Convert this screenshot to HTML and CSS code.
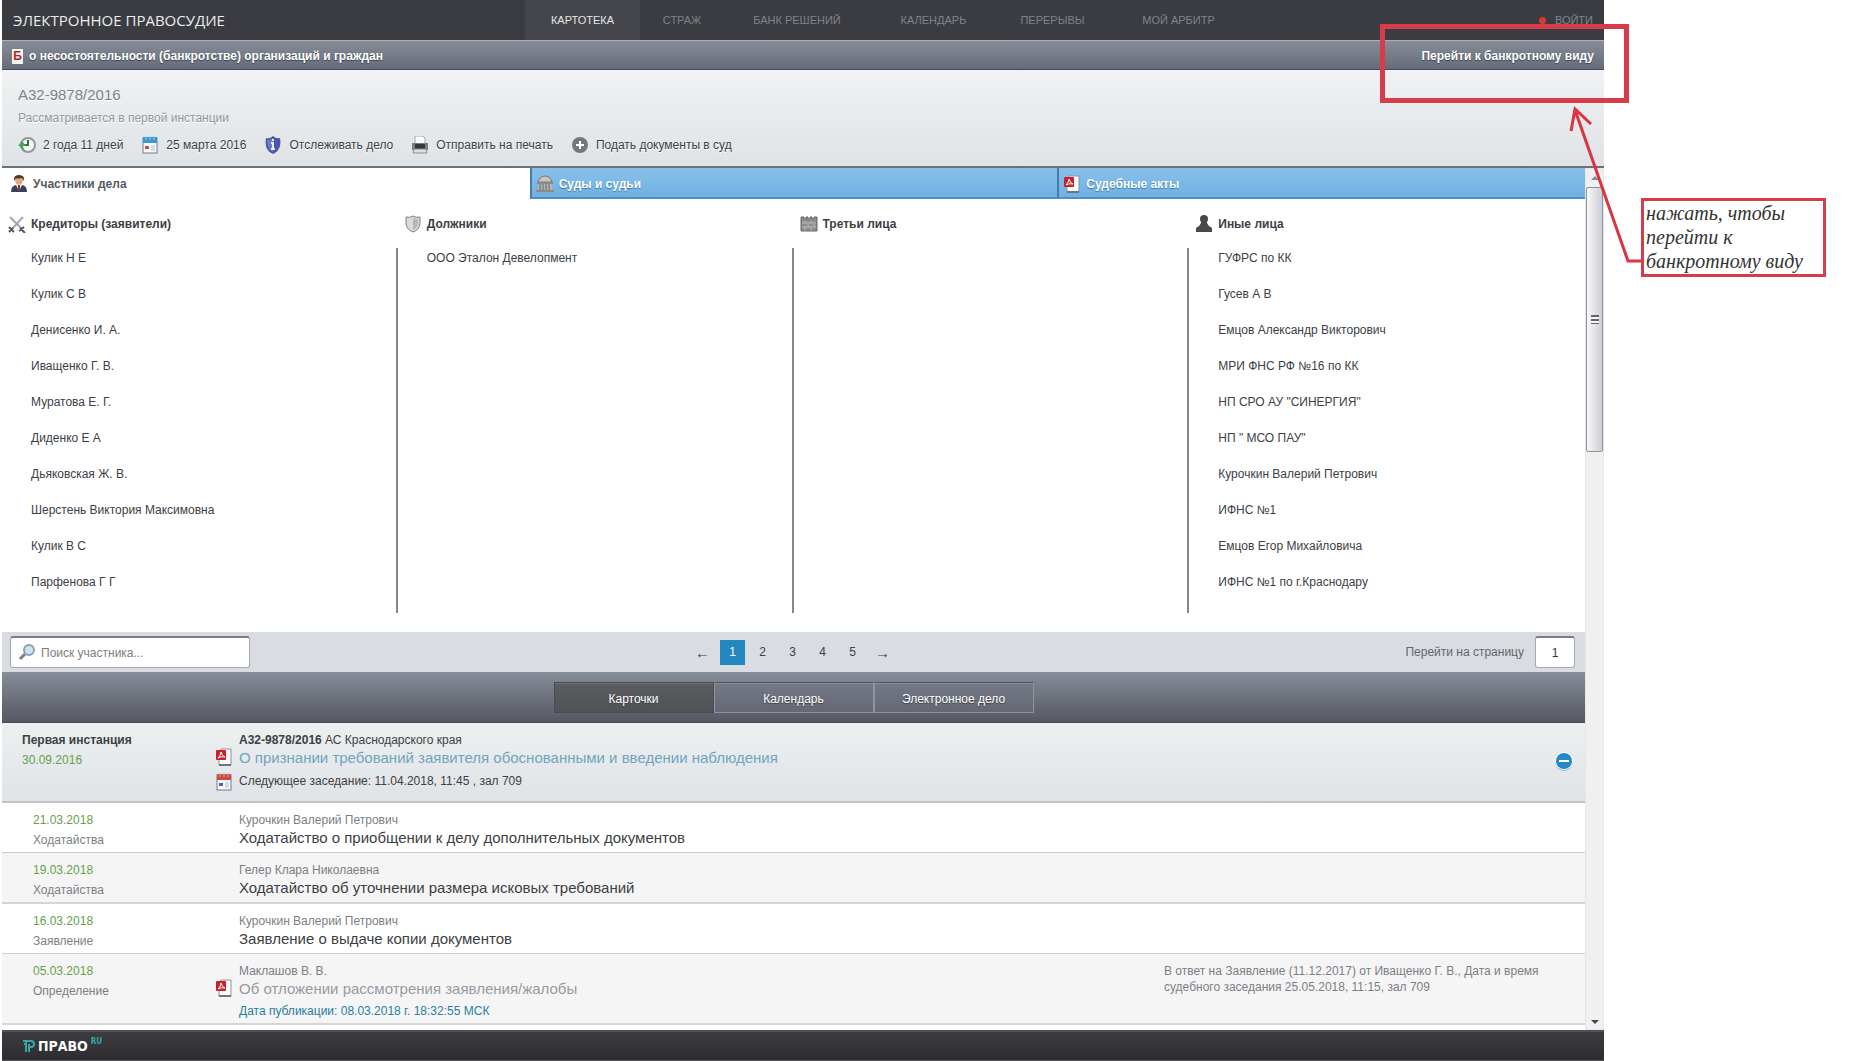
FILE: index.html
```html
<!DOCTYPE html>
<html lang="ru">
<head>
<meta charset="utf-8">
<title>Электронное правосудие</title>
<link rel="stylesheet" href="styles.css">
</head>
<body>
<svg class="sprite" aria-hidden="true">
  <symbol id="pdf" viewBox="0 0 16 18">
    <path d="M5 1h10v16H3V6z" fill="#fcfcfc" stroke="#8d9298"/>
    <path d="M3 17h12" stroke="#6f747a" stroke-width="2"/>
    <rect x="0" y="2" width="10" height="10" rx="1" fill="#c9202c"/>
    <path d="M2 10q3-3 3-6 1 4 4 5-4-1-7 1" fill="none" stroke="#fff"/>
  </symbol>
  <symbol id="calendar" viewBox="0 0 16 18">
    <rect x="1" y="2" width="14" height="15" fill="#f8fafb" stroke="#6d7d8d"/>
    <rect x="1" y="1" width="14" height="6" class="calendar-top"/>
    <path d="M4 0v4M8 0v4M12 0v4" stroke="#a8c4d6"/>
    <path d="M3 10h4v3H3z" class="calendar-day"/>
    <path d="M9 10h4M9 12h4M9 14h4" stroke="#b8bfc7"/>
  </symbol>
</svg>

<div class="page">
  <div class="app">
    <header class="topbar">
      <a class="brand" href="#">ЭЛЕКТРОННОЕ ПРАВОСУДИЕ</a>
      <nav class="menu">
        <a class="current" href="#">КАРТОТЕКА</a>
        <a href="#">СТРАЖ</a>
        <a href="#">БАНК РЕШЕНИЙ</a>
        <a href="#">КАЛЕНДАРЬ</a>
        <a href="#">ПЕРЕРЫВЫ</a>
        <a href="#">МОЙ АРБИТР</a>
      </nav>
      <a class="login" href="#"><span class="dot"></span>ВОЙТИ</a>
    </header>

    <div class="category">
      <span class="badge">Б</span>
      <span>о несостоятельности (банкротстве) организаций и граждан</span>
      <a class="switch" href="#">Перейти к банкротному виду</a>
    </div>

    <section class="case">
      <h1>А32-9878/2016</h1>
      <p class="status">Рассматривается в первой инстанции</p>
      <ul class="actions">
        <li>
          <svg class="icon" viewBox="0 0 18 18"><circle cx="10" cy="9" r="7" fill="#f4f6f6" stroke="#8f9a97" stroke-width="2"/><path d="M10 4v5H6" fill="none" stroke="#3d6a4c" stroke-width="2"/><path d="M0 10l4-5 4 5H5q0 3 3 5-5-1-6-5z" fill="#4aa35c"/></svg>
          2 года 11 дней
        </li>
        <li><svg class="icon blue"><use href="#calendar"/></svg>25 марта 2016</li>
        <li>
          <a href="#"><svg class="icon" viewBox="0 0 18 18"><path d="M9 0q3 3 7 2 1 4 0 8-1 5-7 8-6-3-7-8-1-4 0-8 4 1 7-2z" fill="#4659a6"/><path d="M9 2v14Q3 13 3 4q4 0 6-2z" fill="#6c7dc2"/><path d="M9 3v2M7 7h2v6M7 13h4" fill="none" stroke="#e9edfa" stroke-width="2"/></svg>Отслеживать дело</a>
        </li>
        <li>
          <a href="#"><svg class="icon" viewBox="0 0 18 18"><path d="M4 0h8l2 2v6H4z" fill="#fafafa" stroke="#a2a6aa"/><path d="M1 7h16v7H1z" fill="#777c82"/><path d="M4 8h10v5H4z" fill="#33373b"/><path d="M3 13h12l1 4H2z" fill="#dcdfe1" stroke="#888d92"/></svg>Отправить на печать</a>
        </li>
        <li>
          <a href="#"><svg class="icon" viewBox="0 0 18 18"><circle cx="9" cy="9" r="8" fill="#74787c"/><path d="M9 5v8M5 9h8" stroke="#fff" stroke-width="2"/></svg>Подать документы в суд</a>
        </li>
      </ul>
    </section>

    <div class="workspace">
      <main class="content">
        <nav class="tabs">
          <a class="tab active" href="#">
            <svg class="icon" viewBox="0 0 18 18"><path d="M1 17q0-6 5-7h6q5 1 5 7z" fill="#34405c"/><path d="M6 10l3 6 3-6z" fill="#fff"/><path d="M8 10h2v6H8z" fill="#a32c33"/><ellipse cx="9" cy="5" rx="4" ry="5" fill="#e0a985"/><path d="M4 6q-1-6 5-6t5 6q-1-3-3-3-4 1-5 0-1 1-2 3z" fill="#503626"/></svg>
            Участники дела
          </a>
          <a class="tab" href="#">
            <svg class="icon" viewBox="0 0 18 18"><path d="M2 7q2-6 7-6t7 6z" fill="#c8c5bf" stroke="#77746f"/><path d="M1 7h16v2H1zM0 15h18v2H0z" fill="#8d8a85"/><path d="M3 9v6M6 9v6M9 9v6M12 9v6M15 9v6" stroke="#b7b3ad" stroke-width="2"/><path d="M4 9v6M7 9v6M10 9v6M13 9v6" stroke="#716e69"/></svg>
            Суды и судьи
          </a>
          <a class="tab" href="#"><svg class="icon"><use href="#pdf"/></svg>Судебные акты</a>
        </nav>

        <div class="parties">
          <section>
            <h2><svg class="icon" viewBox="0 0 18 18"><path d="M2 2l12 12M15 2L4 14" stroke="#a6a9ac" stroke-width="2"/><path d="M1 12l5 5M1 17l4-4M11 16l5-4M12 13l5 5" stroke="#54585c" stroke-width="2"/></svg>Кредиторы (заявители)</h2>
            <ul><li>Кулик Н Е</li><li>Кулик С В</li><li>Денисенко И. А.</li><li>Иващенко Г. В.</li><li>Муратова Е. Г.</li><li>Диденко Е А</li><li>Дьяковская Ж. В.</li><li>Шерстень Виктория Максимовна</li><li>Кулик В С</li><li>Парфенова Г Г</li></ul>
          </section>
          <section>
            <h2><svg class="icon" viewBox="0 0 18 18"><path d="M9 1q3 2 7 1v7q-1 6-7 8-6-2-7-8V2q4 1 7-1z" fill="#d8dadb" stroke="#7d8184"/><path d="M9 3q3 1 5 1v5q-1 4-5 6z" fill="#b5b8ba"/></svg>Должники</h2>
            <ul><li>ООО Эталон Девелопмент</li></ul>
          </section>
          <section>
            <h2><svg class="icon" viewBox="0 0 18 18"><path d="M1 2h3v2h2V2h2v2h2V2h2v2h2V2h3v14H1z" fill="#8e8e8e" stroke="#666"/><path d="M2 8h14M2 12h14M5 6v2M11 6v2M8 9v3M14 9v3M5 12v4M11 12v4" stroke="#b9b9b9"/></svg>Третьи лица</h2>
            <ul></ul>
          </section>
          <section>
            <h2><svg class="icon" viewBox="0 0 18 18"><path d="M9 0q4 0 4 4 0 2-1 3v1q1 3 5 5v4H1v-4q4-2 5-5V7Q5 6 5 4q0-4 4-4z" fill="#47494b"/></svg>Иные лица</h2>
            <ul><li>ГУФРС по КК</li><li>Гусев А В</li><li>Емцов Александр Викторович</li><li>МРИ ФНС РФ №16 по КК</li><li>НП СРО АУ "СИНЕРГИЯ"</li><li>НП " МСО ПАУ"</li><li>Курочкин Валерий Петрович</li><li>ИФНС №1</li><li>Емцов Егор Михайловича</li><li>ИФНС №1 по г.Краснодару</li></ul>
          </section>
        </div>

        <div class="pager">
          <label class="search">
            <svg class="icon" viewBox="0 0 18 18"><path d="M7 11l-5 5" stroke="#7d8185" stroke-width="3"/><circle cx="11" cy="7" r="5" fill="#cfe2ee" stroke="#8fa0ae" stroke-width="2"/></svg>
            <input type="text" placeholder="Поиск участника..." aria-label="Поиск участника">
          </label>
          <nav class="numbers">
            <a class="step" href="#">←</a><a class="current" href="#">1</a><a href="#">2</a><a href="#">3</a><a href="#">4</a><a href="#">5</a><a class="step" href="#">→</a>
          </nav>
          <div class="goto">
            <label for="page-number">Перейти на страницу</label>
            <input id="page-number" type="text" value="1">
          </div>
        </div>

        <div class="views">
          <button type="button" class="pressed">Карточки</button><button type="button">Календарь</button><button type="button">Электронное дело</button>
        </div>

        <section class="instance">
          <div class="instance-date">
            <strong>Первая инстанция</strong>
            <time>30.09.2016</time>
          </div>
          <div class="instance-main">
            <p><strong>А32-9878/2016</strong> АС Краснодарского края</p>
            <a class="title" href="#"><svg class="icon lead"><use href="#pdf"/></svg>О признании требований заявителя обоснованными и введении наблюдения</a>
            <p class="next"><svg class="icon lead red"><use href="#calendar"/></svg>Следующее заседание: 11.04.2018, 11:45 , зал 709</p>
          </div>
          <button type="button" class="collapse" aria-label="Свернуть">
            <svg viewBox="0 0 20 20"><circle cx="10" cy="11" r="9" fill="#9fb6c4"/><circle cx="10" cy="10" r="9" fill="#fff"/><circle cx="10" cy="10" r="8" fill="#2489c5"/><path d="M5 10h10" stroke="#fff" stroke-width="2"/></svg>
          </button>
        </section>

        <ol class="events">
          <li>
            <div class="when"><time>21.03.2018</time><span>Ходатайства</span></div>
            <div class="what"><span>Курочкин Валерий Петрович</span><span class="title">Ходатайство о приобщении к делу дополнительных документов</span></div>
          </li>
          <li>
            <div class="when"><time>19.03.2018</time><span>Ходатайства</span></div>
            <div class="what"><span>Гелер Клара Николаевна</span><span class="title">Ходатайство об уточнении размера исковых требований</span></div>
          </li>
          <li>
            <div class="when"><time>16.03.2018</time><span>Заявление</span></div>
            <div class="what"><span>Курочкин Валерий Петрович</span><span class="title">Заявление о выдаче копии документов</span></div>
          </li>
          <li>
            <div class="when"><time>05.03.2018</time><span>Определение</span></div>
            <div class="what">
              <span>Маклашов В. В.</span>
              <a class="title" href="#"><svg class="icon lead"><use href="#pdf"/></svg>Об отложении рассмотрения заявления/жалобы</a>
              <span class="published">Дата публикации: 08.03.2018 г. 18:32:55 МСК</span>
            </div>
            <p class="note">В ответ на Заявление (11.12.2017) от Иващенко Г. В., Дата и время судебного заседания 25.05.2018, 11:15, зал 709</p>
          </li>
        </ol>
      </main>

      <div class="scrollbar" aria-hidden="true">
        <span class="arrow up"></span>
        <span class="thumb"><span class="grip"></span></span>
        <span class="arrow down"></span>
      </div>
    </div>

    <footer class="footer">
      <a href="#">
        <svg viewBox="0 0 12 12"><path d="M0 1h6M3 1v11M1 4h2M6 12V4M5 1h3q3 0 3 3t-3 3H6" fill="none" stroke="#35a7a5" stroke-width="2"/></svg>
        <span>ПРАВО</span><sup>RU</sup>
      </a>
    </footer>
  </div>

  <div class="markup">
    <div class="frame"></div>
    <svg class="pointer" viewBox="0 0 80 160"><path d="M75 155H61L8 4M4 25L8 3l16 15" fill="none" stroke="#d9343f" stroke-width="3"/></svg>
    <p class="hint">нажать, чтобы перейти к банкротному виду</p>
  </div>
</div>
</body>
</html>
```
FILE: styles.css
```css
* { box-sizing: border-box; }
body, h1, h2, p, ul, ol { margin: 0; padding: 0; }
ul, ol { list-style: none; }
body { background: #fff; color: #3c4046; font: 12px/16px "Liberation Sans", Arial, sans-serif; }
a { color: inherit; text-decoration: none; }
button, input { font: inherit; }
.sprite { position: absolute; width: 0; height: 0; }
.icon { width: 18px; height: 18px; flex: none; }
.blue { --top: #3a9ad0; --day: #d2473f; }
.red { --top: #d2473f; --day: #4b62a8; }
.calendar-top { fill: var(--top); }
.calendar-day { fill: var(--day); }

.page { position: relative; padding: 0 266px 0 2px; }
.app { display: flex; flex-direction: column; min-height: 100vh; }

.topbar { display: flex; height: 40px; background: #3a3c41; color: #808389; font-size: 11px; line-height: 40px; }
.brand { width: 523px; padding-left: 11px; color: #eceded; font: 15px/40px "Open Sans", sans-serif; }
.menu { display: grid; grid-template-columns: 115px 84px 146px 127px 111px 141px; text-align: center; }
.menu .current { background: #44464b; color: #e4e5e6; }
.login { display: flex; align-items: center; gap: 9px; margin-left: auto; padding-right: 11px; }
.dot { width: 7px; height: 7px; border-radius: 50%; background: #d8392f; }

.category { display: flex; align-items: center; gap: 6px; height: 30px; padding: 2px 10px 0; border-top: 1px solid #aab2b9; border-bottom: 1px solid #454a54; background: linear-gradient(#868d97, #666b79); color: #fff; font-weight: bold; text-shadow: 0 1px 1px #3c414b; }
.badge { width: 11px; height: 15px; background: #f6f3f3; color: #b71f2b; line-height: 15px; text-align: center; text-shadow: none; }
.switch { margin-left: auto; }

.case { padding: 15px 16px 11px; border-bottom: 2px solid #69717a; background: linear-gradient(#f0f2f3, #dfe3e6); color: #3c4046; text-shadow: 0 1px 0 #fff; }
.case h1 { color: #7c8187; font-size: 15px; font-weight: normal; line-height: 20px; }
.status { margin-top: 5px; color: #92979c; }
.actions { display: flex; gap: 18px; margin-top: 9px; line-height: 20px; }
.actions li, .actions a { display: flex; align-items: center; gap: 7px; }

.workspace { display: flex; flex: 1; }
.content { flex: 1; min-width: 0; }
.tabs { display: grid; grid-template-columns: repeat(3, 1fr); }
.tab { display: flex; align-items: center; gap: 5px; height: 31px; padding: 2px 0 0 4px; border-bottom: 2px solid #4e8fc4; border-left: 2px solid #427db2; background: linear-gradient(#87c1e9, #70b1e3); color: #fff; font-weight: bold; text-shadow: 0 1px 1px #3876a8; }
.tab.active { padding-left: 8px; border-color: #fff; border-left: 0; background: #fff; color: #555b64; text-shadow: none; }

.parties { display: grid; grid-template-columns: repeat(4, 1fr); padding-bottom: 19px; }
.parties h2 { display: flex; align-items: center; gap: 5px; height: 49px; padding-left: 6px; font-size: 12px; }
.parties ul { height: 365px; padding: 1px 0 0 29px; border-right: 2px solid #85878a; }
.parties section:last-child ul { border: 0; }
.parties li { height: 36px; line-height: 18px; }

.pager { display: grid; grid-template-columns: 1fr auto 1fr; align-items: center; height: 40px; padding: 0 10px 0 8px; background: #d9dde2; }
.pager input { height: 32px; border: 1px solid #a5a8ad; border-top: 2px solid #797c83; border-radius: 3px; background: #fff; color: #33363b; }
.search { display: flex; align-items: center; width: 240px; position: relative; }
.search .icon { position: absolute; left: 8px; }
.search input { width: 100%; padding: 0 8px 0 30px; }
.search input::placeholder { color: #7b7e83; opacity: 1; }
.numbers { display: flex; gap: 5px; line-height: 25px; text-align: center; }
.numbers a { width: 25px; }
.numbers .step { font-size: 15px; }
.numbers .current { background: #2387c0; color: #fff; }
.goto { display: flex; align-items: center; justify-content: flex-end; gap: 11px; color: #62666c; }
.goto input { width: 40px; padding: 0; text-align: center; }

.views { display: flex; justify-content: center; padding: 10px 0 9px; border-bottom: 1px solid #4b4c56; background: linear-gradient(#868e99, #565762); }
.views button { width: 160px; height: 31px; padding: 2px 0 0; border: 1px solid #8f949e; border-top-color: #50535d; background: linear-gradient(#757986, #656874); box-shadow: inset 0 1px 0 #8b909a; color: #fff; text-shadow: 0 1px 1px #3c3e46; }
.views .pressed { border-color: #494c51; background: linear-gradient(#5b5d61, #4f5256); box-shadow: inset 0 1px 0 #6d7075; }

.instance { display: flex; padding: 9px 10px 12px 20px; border-bottom: 2px solid #c1c3c4; background: linear-gradient(#edf0f0, #dfe3e7); }
.instance-date { display: flex; flex-direction: column; gap: 4px; width: 217px; }
time { color: #68a04a; }
.instance-main { flex: 1; }
.title { display: block; position: relative; font-size: 15px; line-height: 20px; }
.instance .title { color: #6fa5c0; }
.lead { position: absolute; left: -24px; top: 0; }
.next { position: relative; margin-top: 5px; }
.collapse { align-self: center; width: 22px; height: 22px; padding: 1px; border: 0; background: none; }

.events { padding-bottom: 5px; }
.events li { display: grid; grid-template-columns: 206px 1fr 421px; padding: 9px 0 4px 31px; border-bottom: 1px solid #cfcfcf; color: #7b7f85; }
.events li:nth-child(even) { border-bottom: 2px solid #d5d5d5; background: #f5f5f6; }
.when { display: flex; flex-direction: column; gap: 4px; }
.what span { display: block; }
.what span.title { color: #3c3f44; }
.what a.title { color: #969ba1; }
.what .published { margin-top: 4px; color: #27809f; }
.note { padding-right: 40px; }

.scrollbar { display: flex; flex-direction: column; align-items: center; width: 19px; border: 1px solid #e6e6e6; background: #f0f0f0; }
.arrow { border: 4px solid transparent; }
.up { margin: 3px 0 7px; border-bottom-color: #86898d; }
.down { margin: auto 0 1px; border-top-color: #44474b; }
.thumb { display: flex; align-items: center; justify-content: center; width: 17px; height: 265px; border: 1px solid #8f9297; border-radius: 2px; background: linear-gradient(90deg, #f8f8f9, #cdced6); }
.grip { width: 8px; height: 9px; background: repeating-linear-gradient(#63666b 0 2px, #f4f4f4 2px 4px); }

.footer { height: 31px; padding-left: 21px; border-top: 2px solid #505257; border-bottom: 1px solid #55575c; background: linear-gradient(#3b3b40, #2c2c31); }
.footer a { display: inline-flex; align-items: center; gap: 3px; height: 28px; color: #fff; font: bold 14px/20px "Liberation Sans Narrow", "DejaVu Sans Condensed", sans-serif; }
.footer svg { width: 12px; height: 12px; }
.footer sup { align-self: flex-start; color: #35a7a5; font-size: 8px; }

/* Annotation layer drawn over the page */
.markup { position: absolute; top: 0; right: 0; width: 490px; }
.frame { position: absolute; left: 0; top: 24px; width: 249px; height: 79px; border: 5px solid #d63c49; }
.pointer { position: absolute; left: 187px; top: 106px; width: 80px; height: 160px; }
.hint { position: absolute; left: 261px; top: 198px; width: 185px; height: 79px; padding: 0 2px; border: 3px solid #d63c49; color: #333; font: italic 20px/24px "Liberation Serif", "Times New Roman", serif; }
```
